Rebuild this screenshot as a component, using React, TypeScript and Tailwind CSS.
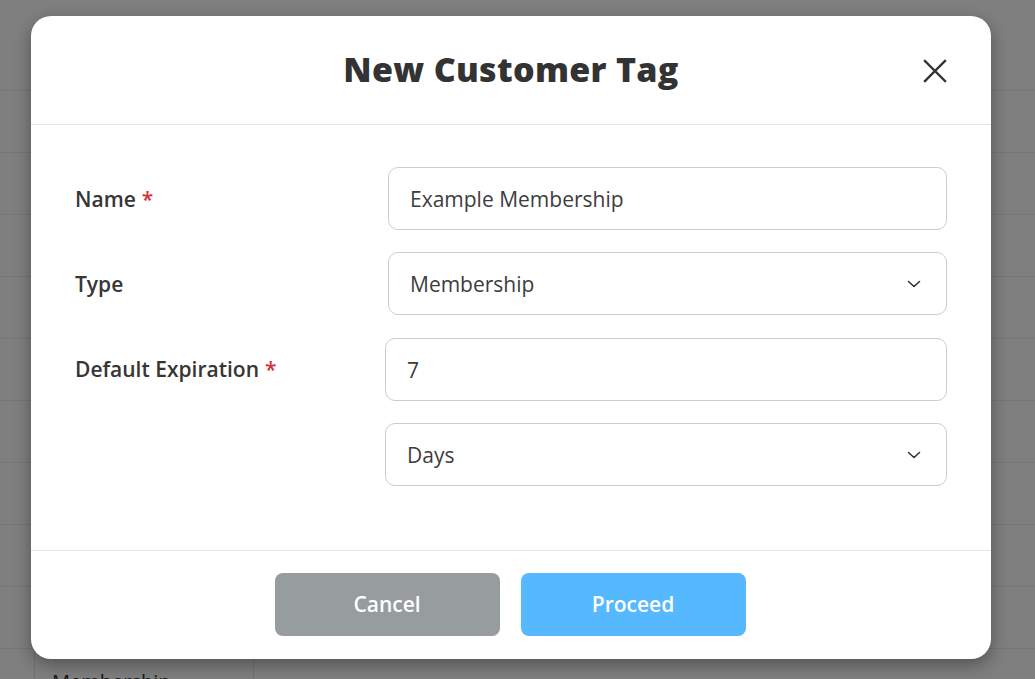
import React from 'react';

const font = { fontFamily: '"Open Sans", "Noto Sans", sans-serif' };

function Chevron() {
  return (
    <svg width="14" height="8" viewBox="0 0 14 8" fill="none" className="shrink-0">
      <path d="M1.5 1.5 L7 6.5 L12.5 1.5" stroke="#333" strokeWidth="1.6" strokeLinecap="round" strokeLinejoin="round" />
    </svg>
  );
}

function Field({ value, select }: { value: string; select?: boolean }) {
  return (
    <div className="flex-1 h-[63px] flex items-center justify-between rounded-[10px] border border-[#cccccc] bg-white pl-[21px] pr-[25px]">
      <span className="text-[21px] text-[#3d3d3d] pt-[3px]">{value}</span>
      {select && <Chevron />}
    </div>
  );
}

function Label({ text, required }: { text: string; required?: boolean }) {
  return (
    <div className="text-[21px] font-semibold text-[#363636]">
      {text}
      {required && <span className="text-[#d0343a] ml-[6px]">*</span>}
    </div>
  );
}

export default function App() {
  const rows = Array.from({ length: 10 });
  return (
    <div className="relative w-[1035px] h-[679px] overflow-hidden bg-white" style={font}>
      {/* table behind the dialog */}
      <div className="flex flex-col pt-[28px]">
        <div className="h-[62px] ml-[34px] border-l border-[#e6e6e6]" />
        {rows.map((_, i) => (
          <div key={i} className="h-[62px] flex border-t border-[#ececec]">
            <div className="w-[34px]" />
            <div className="w-[220px] border-l border-r border-[#e6e6e6] pl-[17px] pt-[18px] text-[20px] text-[#333]">
              {i === 9 ? 'Membership' : ''}
            </div>
          </div>
        ))}
      </div>

      <div className="absolute inset-0 bg-black/50 pt-[16px] pl-[31px]">
        <div className="w-[960px] h-[643px] bg-white rounded-[20px] shadow-[0_6px_18px_rgba(0,0,0,0.35)] flex flex-col overflow-hidden">
          <div className="relative h-[109px] shrink-0 flex items-center justify-center border-b border-[#e5e5e5]">
            <h1 className="text-[34px] font-extrabold text-[#333333] tracking-[0.3px] pb-[2px]">New Customer Tag</h1>
            <svg className="absolute right-[44px] top-[43px]" width="24" height="24" viewBox="0 0 24 24" fill="none">
              <path d="M2 2 L22 22 M22 2 L2 22" stroke="#333" strokeWidth="2.4" strokeLinecap="square" />
            </svg>
          </div>

          <div className="flex-1 flex flex-col gap-[22px] pl-[44px] pr-[44px] pt-[42px]">
            <div className="flex items-center">
              <div className="w-[313px] pt-[2px]"><Label text="Name" required /></div>
              <Field value="Example Membership" />
            </div>
            <div className="flex items-center">
              <div className="w-[313px] pt-[2px]"><Label text="Type" /></div>
              <Field value="Membership" select />
            </div>
            <div className="flex items-center mt-[1px]">
              <div className="w-[310px]"><Label text="Default Expiration" required /></div>
              <Field value="7" />
            </div>
            <div className="flex items-center">
              <div className="w-[310px]" />
              <Field value="Days" select />
            </div>
          </div>

          <div className="h-[109px] shrink-0 border-t border-[#e5e5e5] flex justify-center gap-[21px] pt-[22px] pr-[2px]">
            <button className="w-[225px] h-[63px] rounded-[8px] bg-[#979c9e] text-white text-[21px] font-semibold">Cancel</button>
            <button className="w-[225px] h-[63px] rounded-[8px] bg-[#56b8ff] text-white text-[21px] font-semibold">Proceed</button>
          </div>
        </div>
      </div>
    </div>
  );
}
